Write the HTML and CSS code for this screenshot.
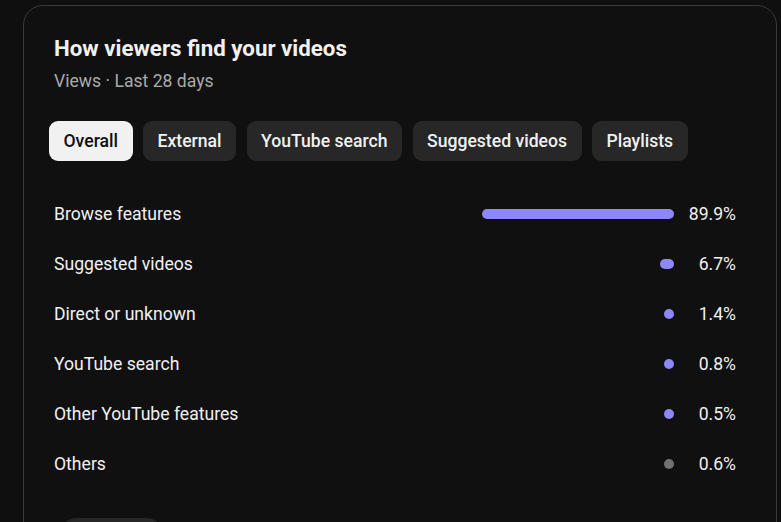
FILE: index.html
```html
<!DOCTYPE html>
<html lang="en">
<head>
    <meta charset="UTF-8">
    <meta name="viewport" content="width=device-width, initial-scale=1.0">
    <title>Traffic sources</title>
    <link rel="stylesheet" href="styles.css">
</head>
<body>

<div class="card">
    <h2 class="card-title">How viewers find your videos</h2>
    <div class="card-subtitle">Views · Last 28 days</div>

    <div class="chips">
        <button class="chip active">Overall</button>
        <button class="chip">External</button>
        <button class="chip">YouTube search</button>
        <button class="chip">Suggested videos</button>
        <button class="chip">Playlists</button>
    </div>

    <div class="sources">
        <div class="source-row">
            <span class="source-name">Browse features</span>
            <div class="track"><div class="bar" style="width: 89.9%"></div></div>
            <span class="source-value">89.9%</span>
        </div>
        <div class="source-row">
            <span class="source-name">Suggested videos</span>
            <div class="track"><div class="bar" style="width: 6.7%"></div></div>
            <span class="source-value">6.7%</span>
        </div>
        <div class="source-row">
            <span class="source-name">Direct or unknown</span>
            <div class="track"><div class="bar" style="width: 1.4%"></div></div>
            <span class="source-value">1.4%</span>
        </div>
        <div class="source-row">
            <span class="source-name">YouTube search</span>
            <div class="track"><div class="bar" style="width: 0.8%"></div></div>
            <span class="source-value">0.8%</span>
        </div>
        <div class="source-row">
            <span class="source-name">Other YouTube features</span>
            <div class="track"><div class="bar" style="width: 0.5%"></div></div>
            <span class="source-value">0.5%</span>
        </div>
        <div class="source-row">
            <span class="source-name">Others</span>
            <div class="track"><div class="bar other" style="width: 0.6%"></div></div>
            <span class="source-value">0.6%</span>
        </div>
    </div>

    <button class="more-btn">See more</button>
</div>

</body>
</html>
```

FILE: styles.css
```css
body {
    margin: 0;
    padding: 5px 0 0 23px;
    background-color: #0f0f0f;
    color: #f1f1f1;
    font-family: Roboto, Arial, sans-serif;
    overflow: hidden;
}

.card {
    width: 754px;
    box-sizing: border-box;
    padding: 28px 40px 40px 30px;
    background-color: #101010;
    border: 1px solid #3b3b3b;
    border-radius: 20px;
}

.card-title {
    margin: 0;
    font-size: 22.3px;
    line-height: 28px;
    font-weight: 700;
    color: #f1f1f1;
}

.card-subtitle {
    margin-top: 7px;
    font-size: 17.6px;
    line-height: 24px;
    color: #aaaaaa;
}

.chips {
    display: flex;
    gap: 10.5px;
    margin: 28px 0 0 -5px;
}

.chip {
    height: 40px;
    padding: 0 14.5px;
    border: none;
    border-radius: 9px;
    background-color: #272727;
    color: #f1f1f1;
    font-family: Roboto, Arial, sans-serif;
    font-size: 17.6px;
    font-weight: 500;
    cursor: pointer;
}

.chip.active {
    background-color: #f1f1f1;
    color: #0f0f0f;
}

.sources {
    margin-top: 28px;
}

.source-row {
    display: flex;
    align-items: center;
    height: 50px;
    font-size: 17.6px;
}

.source-name {
    flex: 1;
}

.track {
    width: 214px;
    display: flex;
    justify-content: flex-end;
}

.bar {
    min-width: 10px;
    height: 10px;
    border-radius: 5px;
    background-color: #8e87f8;
}

.bar.other {
    background-color: #717171;
}

.source-value {
    width: 62px;
    text-align: right;
}

.more-btn {
    margin: 29px 0 0 5px;
    height: 36px;
    padding: 0 20px;
    border: none;
    border-radius: 18px;
    background-color: #272727;
    color: #f1f1f1;
    font-family: Roboto, Arial, sans-serif;
    font-size: 15.4px;
    font-weight: 500;
}
```
